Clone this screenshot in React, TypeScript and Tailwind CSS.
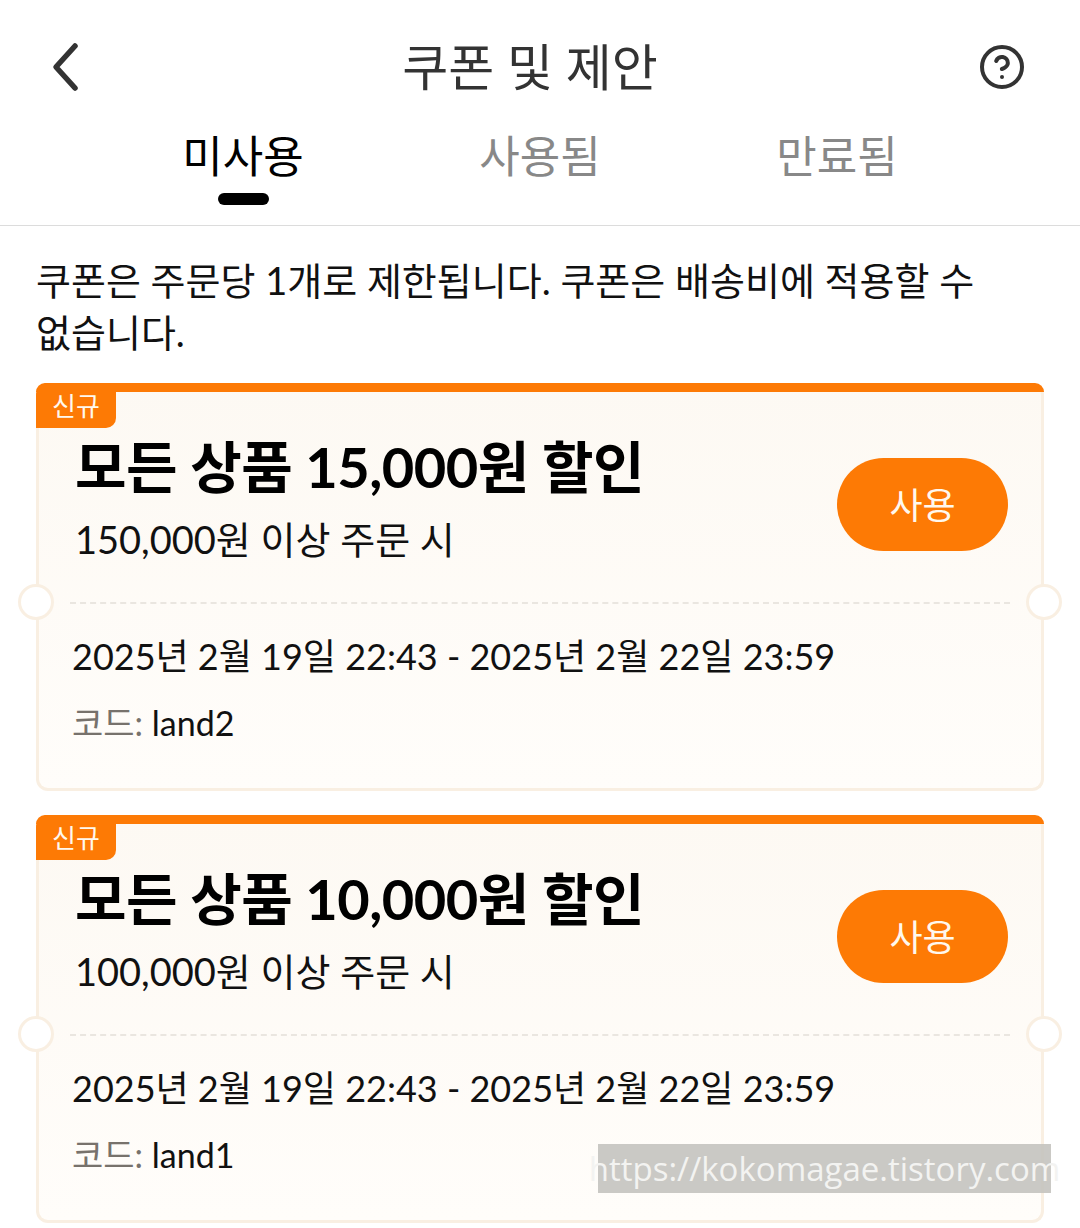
import { CircleHelp } from 'lucide-react';

const coupons = [
  { title: '모든 상품 15,000원 할인', min: '150,000원 이상 주문 시', code: 'land2' },
  { title: '모든 상품 10,000원 할인', min: '100,000원 이상 주문 시', code: 'land1' },
];

const tabs = ['미사용', '사용됨', '만료됨'];

function CouponCard({ title, min, code }: { title: string; min: string; code: string }) {
  return (
    <div className="relative h-[408px] rounded-[12px] border-[3px] border-t-0 border-[#f9efe2] bg-gradient-to-b from-[#fdf9f3] to-[#fffdfa]">
      <div className="absolute -left-[3px] -right-[3px] top-0 h-[9px] rounded-t-[12px] bg-[#fd7a05]" />
      <div className="absolute -left-[3px] top-0 flex h-[45px] w-[80px] items-center justify-center rounded-tl-[12px] rounded-br-[10px] bg-[#fd7a05] pt-[1px] text-[26px] leading-none text-[#fff8ee]">
        신규
      </div>
      <div className="absolute -left-[21px] top-[201px] h-[36px] w-[36px] rounded-full border-[3px] border-[#f9efe2] bg-white" />
      <div className="absolute -right-[21px] top-[201px] h-[36px] w-[36px] rounded-full border-[3px] border-[#f9efe2] bg-white" />

      <div className="flex h-[219px] items-start justify-between pl-[36px] pr-[33px] pt-[44px]">
        <div>
          <div className="text-[56px] font-bold leading-[80px] tracking-[-0.5px] text-black">{title}</div>
          <div className="mt-[2px] text-[38px] leading-[60px] text-[#111]">{min}</div>
        </div>
        <button className="mt-[31px] flex h-[93px] w-[171px] items-center justify-center rounded-full bg-[#fd7a05] text-[36px] text-[#fff8ee]">
          사용
        </button>
      </div>

      <div className="mx-[31px] border-t-2 border-dashed border-[#eae6e0]" />

      <div className="pl-[33px] pt-[22px]">
        <div className="text-[36px] leading-[60px] text-[#111]">2025년 2월 19일 22:43 - 2025년 2월 22일 23:59</div>
        <div className="mt-[7px] text-[34px] leading-[60px] text-[#111]">
          <span className="text-[#77726c]">코드: </span>
          {code}
        </div>
      </div>
    </div>
  );
}

export default function App() {
  return (
    <div className="relative h-[1228px] w-[1080px] overflow-hidden bg-white font-['Lato','Noto_Sans_CJK_KR',sans-serif]">
      <header className="relative z-10 h-[226px] border-b border-[#dcdcdc] bg-white">
        <div className="flex h-[134px] items-center justify-between pl-[50px] pr-[54px]">
          <svg width="32" height="50" viewBox="0 0 32 50" fill="none" className="text-[#333]">
            <path d="M25 4 L6 25 L25 46" stroke="currentColor" strokeWidth="5.5" strokeLinecap="round" strokeLinejoin="round" />
          </svg>
          <h1 className="text-[50px] font-normal leading-none text-[#333]">쿠폰 및 제안</h1>
          <CircleHelp size={48} strokeWidth={2} className="text-[#333]" />
        </div>
        <div className="flex justify-center">
          {tabs.map((tab, i) => (
            <div key={tab} className="flex w-[297px] flex-col items-center">
              <div className={`text-[44px] leading-[44px] ${i === 0 ? 'text-black' : 'text-[#888]'}`}>{tab}</div>
              {i === 0 && <div className="mt-[15px] h-[12px] w-[51px] rounded-full bg-black" />}
            </div>
          ))}
        </div>
      </header>

      <main className="px-[36px]">
        <p className="pt-[28px] text-[38px] leading-[52px] text-[#111]">
          쿠폰은 주문당 1개로 제한됩니다. 쿠폰은 배송비에 적용할 수
          <br />
          없습니다.
        </p>
        <div className="mt-[25px] flex flex-col gap-[24px]">
          {coupons.map((c) => (
            <CouponCard key={c.code} {...c} />
          ))}
        </div>
      </main>

      <div className="absolute left-[598px] top-[1144px] flex h-[49px] w-[453px] items-center justify-center whitespace-nowrap bg-[#c4c3bf]/90 font-['Open_Sans',sans-serif] text-[33px] leading-none text-[#f3f3f1]">
        https://kokomagae.tistory.com
      </div>
    </div>
  );
}
